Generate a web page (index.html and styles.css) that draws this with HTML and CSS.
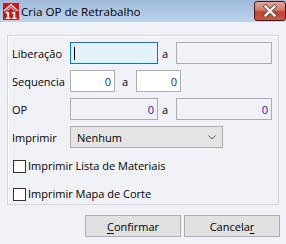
FILE: index.html
```html
<!DOCTYPE html>
<html>
<head>
<meta charset="utf-8">
<link rel="stylesheet" href="styles.css">
</head>
<body>
<div class="window">
  <div class="titlebar">
    <svg class="appicon" width="16" height="17" viewBox="0 0 16 17">
      <rect x="0" y="0" width="16" height="17" fill="#c8161d"/>
      <path d="M1 8 L8 1.5 L15 8" fill="none" stroke="#fff" stroke-width="1.2"/>
      <path d="M3.5 8.5 L8 4.3 L12.5 8.5" fill="none" stroke="#fff" stroke-width="1"/>
      <text x="8" y="16" text-anchor="middle" class="icontext">11</text>
    </svg>
    <span class="title">Cria OP de Retrabalho</span>
    <div class="close">
      <svg width="30" height="18" viewBox="0 0 30 18">
        <path d="M10.5 4.5 L19.5 13.5 M19.5 4.5 L10.5 13.5" stroke="#5a5a5a" stroke-width="4" stroke-linecap="square"/>
        <path d="M10.5 4.5 L19.5 13.5 M19.5 4.5 L10.5 13.5" stroke="#fff" stroke-width="2.2" stroke-linecap="square"/>
      </svg>
    </div>
  </div>
  <div class="content">
    <div class="group">
      <div class="row">
        <span class="label">Liberação</span>
        <div class="field focus w88"><span class="caret"></span></div>
        <span class="sep">a</span>
        <div class="field ro w96"></div>
      </div>
      <div class="row">
        <span class="label">Sequencia</span>
        <div class="field white w45 num">0</div>
        <span class="sep sep2">a</span>
        <div class="field white w45 num">0</div>
      </div>
      <div class="row">
        <span class="label">OP</span>
        <div class="field ro w88 num">0</div>
        <span class="sep">a</span>
        <div class="field ro w96 num">0</div>
      </div>
      <div class="row">
        <span class="label">Imprimir</span>
        <div class="select">
          <span>Nenhum</span>
          <svg class="chev" width="8" height="5" viewBox="0 0 8 5"><path d="M0.5 0.5 L4 4 L7.5 0.5" fill="none" stroke="#555" stroke-width="1"/></svg>
        </div>
      </div>
      <div class="row check">
        <span class="box"></span><span>Imprimir Lista de Materiais</span>
      </div>
      <div class="row check">
        <span class="box"></span><span>Imprimir Mapa de Corte</span>
      </div>
    </div>
    <div class="buttons">
      <div class="btn"><u>C</u>onfirmar</div>
      <div class="btn">Cancela<u>r</u></div>
    </div>
  </div>
</div>
</body>
</html>
```
FILE: styles.css
```css
html, body {
  margin: 0;
  padding: 0;
}
body {
  width: 286px;
  height: 244px;
  overflow: hidden;
  background: #f1f2f8;
  font-family: "Open Sans", "Noto Sans", sans-serif;
  font-size: 11px;
  color: #000;
}
.window {
  width: 286px;
  height: 244px;
}
.titlebar {
  height: 22px;
  display: flex;
  align-items: center;
  background: linear-gradient(#9fbbda, #bcd3ec);
  position: relative;
}
.appicon {
  margin-left: 3px;
  margin-top: 1px;
}
.icontext {
  font-family: "DejaVu Sans", sans-serif;
  font-weight: bold;
  font-size: 9px;
  fill: #fff;
}
.title {
  margin-left: 2px;
  font-size: 11.6px;
  color: #000;
}
.close {
  position: absolute;
  left: 254px;
  top: 1px;
  width: 30px;
  height: 18px;
  border: 1px solid #4b1616;
  border-radius: 3px;
  background: linear-gradient(#e0a899 0%, #d27a66 45%, #c0442e 55%, #c85a3f 100%);
}
.close svg {
  display: block;
}
.content {
  padding: 13px 7px 0 7px;
}
.group {
  border: 1px solid #d6d6d6;
  box-shadow: inset 1px 1px 0 #fff;
  padding: 6px 0 0 4px;
  display: flex;
  flex-direction: column;
  gap: 6px;
  height: 162px;
}
.row {
  display: flex;
  align-items: center;
  height: 22px;
}
.label {
  width: 58px;
  flex: none;
}
.field {
  box-sizing: border-box;
  height: 22px;
  border: 1px solid #adadad;
  display: flex;
  align-items: center;
  padding: 0 3px;
}
.field.focus {
  border-color: #0078d7;
  background: #e5f1fb;
}
.field.white {
  background: #fff;
}
.field.ro {
  background: #f1f2f8;
}
.num {
  justify-content: flex-end;
  color: #1a1ab0;
}
.w88 { width: 88px; }
.w96 { width: 96px; }
.w45 { width: 45px; }
.caret {
  width: 1px;
  height: 13px;
  background: #000;
}
.sep {
  width: 18px;
  box-sizing: border-box;
  padding-left: 4px;
  flex: none;
}
.sep.sep2 {
  width: 21px;
  padding-left: 7px;
}
.select {
  box-sizing: border-box;
  width: 153px;
  height: 22px;
  border: 1px solid #adadad;
  background: #e5e5e5;
  display: flex;
  align-items: center;
  justify-content: space-between;
  padding: 0 6px 0 6px;
}
.chev {
  display: block;
  margin-top: 1px;
}
.row.check {
  align-items: flex-start;
  padding-left: 1px;
}
.box {
  box-sizing: border-box;
  width: 13px;
  height: 13px;
  border: 1px solid #333;
  background: #fff;
  margin-top: 6px;
  margin-right: 2px;
  flex: none;
}
.row.check span:last-child {
  line-height: 22px;
  margin-top: 1px;
}
.buttons {
  display: flex;
  justify-content: flex-end;
  gap: 3px;
  margin-top: 10px;
  margin-right: -1px;
}
.btn {
  box-sizing: border-box;
  width: 96px;
  height: 22px;
  border: 1px solid #adadad;
  background: #e1e1e1;
  display: flex;
  align-items: center;
  justify-content: center;
}
.btn u {
  text-decoration-thickness: 1px;
  text-underline-offset: 2px;
}
```
